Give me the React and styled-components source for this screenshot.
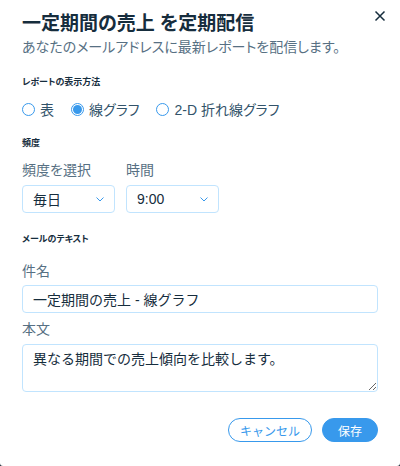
import { useState } from "react";
import styled, { createGlobalStyle } from "styled-components";

const GlobalStyle = createGlobalStyle`
  html, body {
    margin: 0;
    padding: 0;
    background: #20303c;
  }
  * {
    box-sizing: border-box;
  }
`;

const font = `"Liberation Sans", "Noto Sans CJK JP", sans-serif`;

const Modal = styled.div`
  position: relative;
  width: 400px;
  height: 466px;
  background: #fff;
  border-radius: 0 0 3px 3px;
  padding: 12px 22px 0;
  font-family: ${font};
  color: #162d3d;
  font-feature-settings: "palt";
  display: flex;
  flex-direction: column;
`;

const Title = styled.h1`
  margin: 0;
  font-size: 19px;
  line-height: 24px;
  font-weight: 700;
  color: #162d3d;
`;

const Subtitle = styled.p`
  margin: 0;
  font-size: 14px;
  line-height: 22px;
  color: #577083;
`;

const CloseButton = styled.button`
  position: absolute;
  top: 8px;
  right: 12px;
  width: 16px;
  height: 16px;
  padding: 0;
  border: none;
  background: transparent;
  color: #162d3d;
  cursor: pointer;
`;

const SectionLabel = styled.div`
  margin-top: ${(p) => p.$top}px;
  font-size: 9px;
  line-height: 12px;
  font-weight: 700;
  color: #162d3d;
`;

const RadioRow = styled.div`
  margin-top: 11px;
  height: 20px;
  display: flex;
  align-items: center;
  gap: 17px;
`;

const RadioItem = styled.label`
  display: flex;
  align-items: center;
  gap: 5px;
  font-size: 14px;
  color: #32536a;
  cursor: pointer;
`;

const RadioDot = styled.span`
  width: 13px;
  height: 13px;
  border-radius: 50%;
  border: 1px solid #3899ec;
  display: flex;
  align-items: center;
  justify-content: center;

  &::after {
    content: "";
    width: 9px;
    height: 9px;
    border-radius: 50%;
    background: ${(p) => (p.$checked ? "#3899ec" : "transparent")};
  }
`;

const Row = styled.div`
  display: flex;
  gap: 11px;
  margin-top: 11px;
`;

const Field = styled.div`
  display: flex;
  flex-direction: column;
  gap: ${(p) => p.$gap || 4}px;
  margin-top: ${(p) => p.$top || 0}px;
`;

const FieldLabel = styled.div`
  font-size: 14px;
  line-height: 20px;
  color: #577083;
`;

const Select = styled.div`
  width: 93px;
  height: 28px;
  border: 1px solid #c1e4fe;
  border-radius: 4px;
  padding: 0 10px 0 10px;
  display: flex;
  align-items: center;
  justify-content: space-between;
  font-size: 14px;
  color: #162d3d;
`;

const Input = styled.input`
  width: 100%;
  height: 28px;
  border: 1px solid #c1e4fe;
  border-radius: 4px;
  padding: 0 10px;
  font-family: ${font};
  font-size: 14px;
  color: #162d3d;
  outline: none;
`;

const TextArea = styled.textarea`
  width: 100%;
  height: 48px;
  border: 1px solid #c1e4fe;
  border-radius: 4px;
  padding: 5px 10px;
  font-family: ${font};
  font-size: 14px;
  line-height: 18px;
  color: #162d3d;
  outline: none;
  resize: vertical;
`;

const Footer = styled.div`
  margin-top: 26px;
  display: flex;
  justify-content: flex-end;
  gap: 10px;
`;

const Button = styled.button`
  height: 24px;
  padding: 0;
  width: ${(p) => p.$width}px;
  border-radius: 12px;
  border: 1px solid #3899ec;
  background: ${(p) => (p.$primary ? "#3899ec" : "#fff")};
  color: ${(p) => (p.$primary ? "#fff" : "#3899ec")};
  font-family: ${font};
  font-size: 12px;
  cursor: pointer;
`;

const Chevron = () => (
  <svg width="8" height="5" viewBox="0 0 8 5" fill="none">
    <path d="M0.5 0.5L4 4L7.5 0.5" stroke="#3899ec" strokeWidth="1" />
  </svg>
);

const options = ["表", "線グラフ", "2-D 折れ線グラフ"];

export default function App() {
  const [chart, setChart] = useState("線グラフ");

  return (
    <>
      <GlobalStyle />
      <Modal>
        <CloseButton aria-label="close">
          <svg width="16" height="16" viewBox="0 0 16 16">
            <path d="M3.5 3.5L12.5 12.5M12.5 3.5L3.5 12.5" stroke="#162d3d" strokeWidth="1.5" />
          </svg>
        </CloseButton>
        <Title>一定期間の売上 を定期配信</Title>
        <Subtitle>あなたのメールアドレスに最新レポートを配信します。</Subtitle>

        <SectionLabel $top={18}>レポートの表示方法</SectionLabel>
        <RadioRow>
          {options.map((o) => (
            <RadioItem key={o} onClick={() => setChart(o)}>
              <RadioDot $checked={chart === o} />
              {o}
            </RadioItem>
          ))}
        </RadioRow>

        <SectionLabel $top={18}>頻度</SectionLabel>
        <Row>
          <Field $gap={5}>
            <FieldLabel>頻度を選択</FieldLabel>
            <Select>
              毎日
              <Chevron />
            </Select>
          </Field>
          <Field $gap={5}>
            <FieldLabel>時間</FieldLabel>
            <Select>
              9:00
              <Chevron />
            </Select>
          </Field>
        </Row>

        <SectionLabel $top={20}>メールのテキスト</SectionLabel>
        <Field $top={16}>
          <FieldLabel>件名</FieldLabel>
          <Input defaultValue="一定期間の売上 - 線グラフ" />
        </Field>
        <Field $top={6} $gap={5}>
          <FieldLabel>本文</FieldLabel>
          <TextArea defaultValue="異なる期間での売上傾向を比較します。" />
        </Field>

        <Footer>
          <Button $width={84}>キャンセル</Button>
          <Button $width={56} $primary>
            保存
          </Button>
        </Footer>
      </Modal>
    </>
  );
}
